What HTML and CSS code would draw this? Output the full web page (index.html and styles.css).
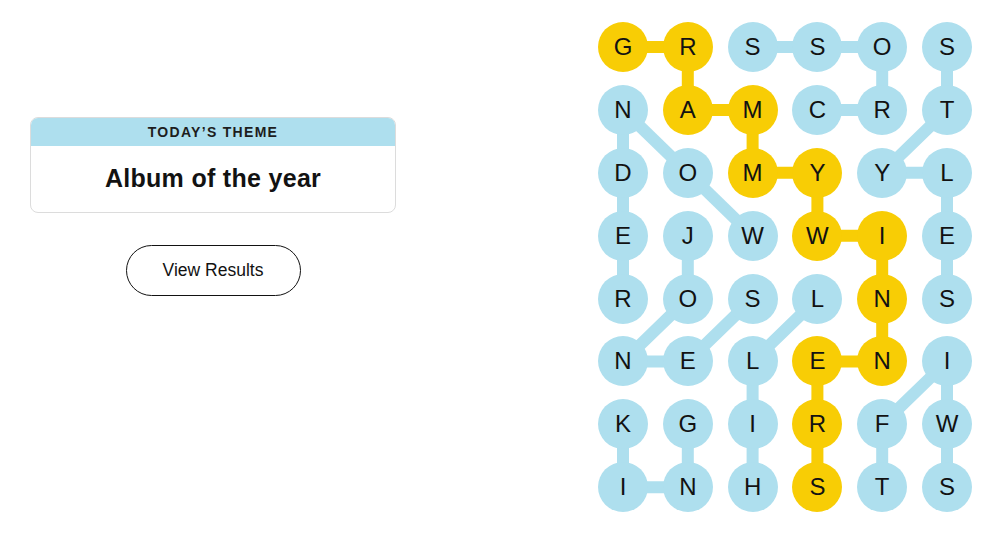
FILE: index.html
```html
<!DOCTYPE html>
<html lang="en">
<head>
  <meta charset="UTF-8" />
  <title>Strands</title>
  <link rel="stylesheet" href="styles.css">
</head>
<body>
  <div class="page">
    <section class="intro">
      <div class="theme-card">
        <div class="theme-label">TODAY’S THEME</div>
        <div class="theme-title">Album of the year</div>
      </div>
      <button class="results-btn">View Results</button>
    </section>

    <section class="board">
      <svg class="links" width="374" height="491" viewBox="0 0 374 491">
        <g class="blue">
          <polyline points="154.6,25 284.2,25 284.2,87.9 219.4,87.9" />
          <polyline points="349,25 349,87.9 284.2,150.8 349,150.8 349,276.6" />
          <polyline points="25,87.9 25,276.6" />
          <polyline points="25,87.9 89.8,150.8 154.6,213.7" />
          <polyline points="89.8,213.7 89.8,276.6 25,339.5 89.8,339.5 154.6,276.6" />
          <polyline points="219.4,276.6 154.6,339.5 154.6,465.3" />
          <polyline points="25,402.4 25,465.3 89.8,465.3 89.8,402.4" />
          <polyline points="349,339.5 284.2,402.4 284.2,465.3" />
          <polyline points="349,339.5 349,465.3" />
        </g>
        <g class="gold">
          <polyline points="25,25 89.8,25 89.8,87.9 154.6,87.9 154.6,150.8 219.4,150.8 219.4,213.7 284.2,213.7 284.2,339.5 219.4,339.5 219.4,465.3" />
        </g>
      </svg>
      <div class="grid">
        <span class="cell found">G</span><span class="cell found">R</span><span class="cell">S</span><span class="cell">S</span><span class="cell">O</span><span class="cell">S</span>
        <span class="cell">N</span><span class="cell found">A</span><span class="cell found">M</span><span class="cell">C</span><span class="cell">R</span><span class="cell">T</span>
        <span class="cell">D</span><span class="cell">O</span><span class="cell found">M</span><span class="cell found">Y</span><span class="cell">Y</span><span class="cell">L</span>
        <span class="cell">E</span><span class="cell">J</span><span class="cell">W</span><span class="cell found">W</span><span class="cell found">I</span><span class="cell">E</span>
        <span class="cell">R</span><span class="cell">O</span><span class="cell">S</span><span class="cell">L</span><span class="cell found">N</span><span class="cell">S</span>
        <span class="cell">N</span><span class="cell">E</span><span class="cell">L</span><span class="cell found">E</span><span class="cell found">N</span><span class="cell">I</span>
        <span class="cell">K</span><span class="cell">G</span><span class="cell">I</span><span class="cell found">R</span><span class="cell">F</span><span class="cell">W</span>
        <span class="cell">I</span><span class="cell">N</span><span class="cell">H</span><span class="cell found">S</span><span class="cell">T</span><span class="cell">S</span>
      </div>
    </section>
  </div>
</body>
</html>
```

FILE: styles.css
```css
body {
  font-family: 'Liberation Sans', Arial, sans-serif;
  background: #fff;
  color: #121212;
  margin: 0;
  padding: 0;
}
.page {
  display: flex;
  align-items: flex-start;
  padding: 22px 0 0 30px;
}
.intro {
  width: 366px;
  margin-top: 95px;
  display: flex;
  flex-direction: column;
  align-items: center;
}
.theme-card {
  width: 100%;
  box-sizing: border-box;
  border: 1px solid #dcdcdc;
  border-radius: 8px;
  overflow: hidden;
  text-align: center;
}
.theme-label {
  background: #aedfee;
  height: 28px;
  line-height: 29px;
  font-size: 14px;
  font-weight: bold;
  letter-spacing: 1.3px;
  color: #1d1d1d;
}
.theme-title {
  height: 66px;
  line-height: 64px;
  font-size: 25px;
  font-weight: bold;
  letter-spacing: 0.3px;
  color: #121212;
}
.results-btn {
  margin-top: 32px;
  width: 175px;
  height: 51px;
  border: 1px solid #121212;
  border-radius: 26px;
  background: #fff;
  font-family: inherit;
  font-size: 17.5px;
  color: #121212;
  cursor: pointer;
}
.board {
  position: relative;
  margin-left: 202px;
  width: 374px;
}
.links {
  position: absolute;
  top: 0;
  left: 0;
  z-index: 0;
}
.links polyline {
  fill: none;
  stroke-width: 12;
  stroke-linejoin: round;
}
.links .blue polyline {
  stroke: #aedfee;
}
.links .gold polyline {
  stroke: #f8cd05;
}
.grid {
  position: relative;
  z-index: 1;
  display: grid;
  grid-template-columns: repeat(6, 50px);
  grid-auto-rows: 50px;
  column-gap: 14.8px;
  row-gap: 12.9px;
}
.cell {
  display: flex;
  align-items: center;
  justify-content: center;
  width: 50px;
  height: 50px;
  border-radius: 50%;
  background: #aedfee;
  font-size: 24px;
  color: #121212;
}
.cell.found {
  background: #f8cd05;
}
```
